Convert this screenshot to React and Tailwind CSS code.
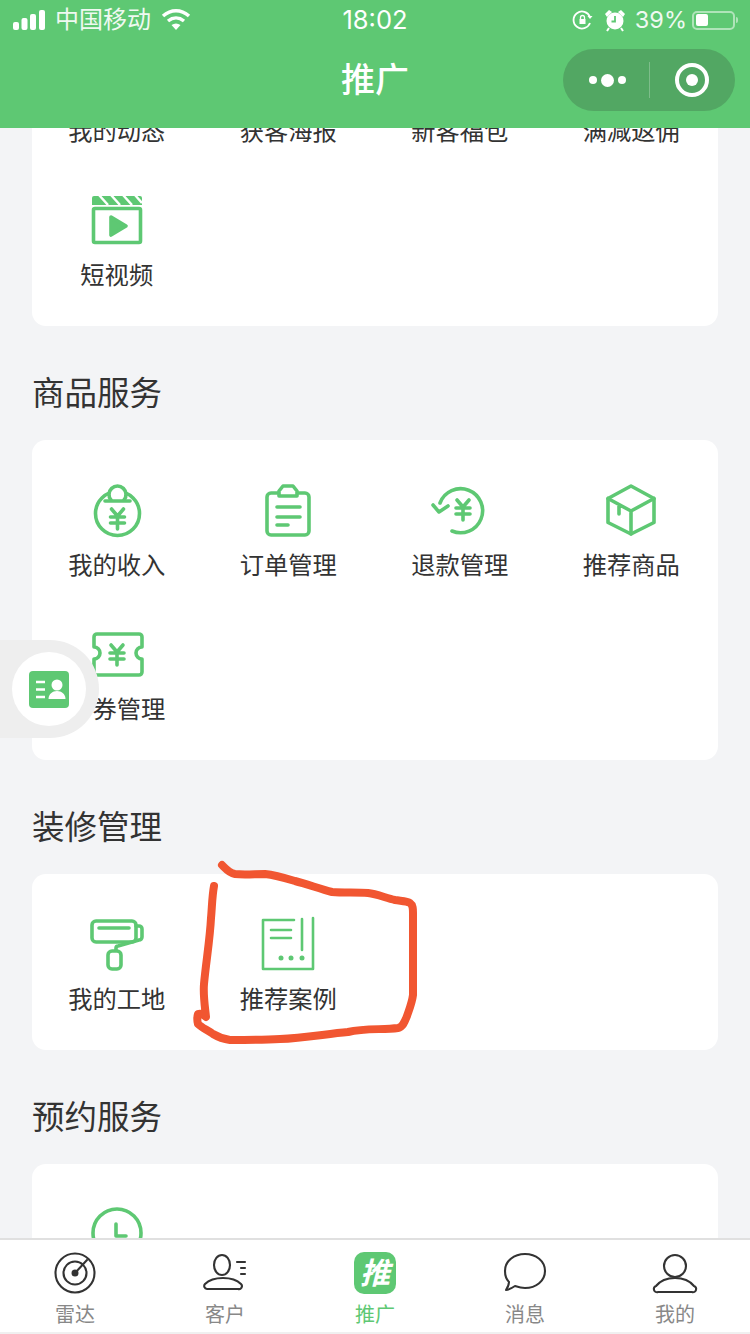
import React from 'react';

const GREEN = '#5ec873';

const Svg = ({ children, size = 64 }) => (
  <svg width={size} height={size} viewBox={`0 0 ${size} ${size}`} fill="none" stroke={GREEN} strokeWidth="3.6" strokeLinecap="round" strokeLinejoin="round">
    {children}
  </svg>
);

const Yen = ({ x, y }) => (
  <path d={`M${x - 6} ${y}l6 7l6 -7M${x - 7} ${y + 8}h14M${x - 7} ${y + 14}h14M${x} ${y + 7}v13`} />
);

const VideoIcon = () => (
  <Svg>
    <path d="M9 7h46a2 2 0 0 1 2 2v7H7V9a2 2 0 0 1 2-2z" fill={GREEN} stroke="none" />
    <path d="M14 6l9 10M26 6l9 10M38 6l9 10M50 6l7 8" stroke="#fff" strokeWidth="2.500" strokeLinecap="butt" />
    <rect x="8.500" y="19.500" width="47" height="34" rx="1.500" />
    <path d="M26 28l15 9l-15 9z" fill={GREEN} />
  </Svg>
);

const IncomeIcon = () => (
  <Svg>
    <circle cx="32.500" cy="34.500" r="22" />
    <path d="M26 21a8.500 8.500 0 1 1 13 0" fill="#fff" />
    <path d="M20 22h25" />
    <Yen x={32.5} y={30} />
  </Svg>
);

const OrderIcon = () => (
  <Svg>
    <rect x="11" y="14" width="42" height="42" rx="4" />
    <path d="M27 7h10l4 5v5H23v-5z" fill="#fff" />
    <path d="M21 28h23M21 38h23M21 46h11" />
  </Svg>
);

const RefundIcon = () => (
  <Svg>
    <path d="M12 24A22 22 0 1 1 24 52" />
    <path d="M5 26l6 7l9-6" />
    <Yen x={35} y={21} />
  </Svg>
);

const BoxIcon = () => (
  <Svg>
    <path d="M32 7l23 12.500v24L32 55L9 43.500v-24z" />
    <path d="M9 19.500L32 32l23-12.500M32 32v23M20 26v9" />
  </Svg>
);

const CouponIcon = () => (
  <Svg>
    <path d="M12 11h42a3 3 0 0 1 3 3v10a6 6 0 0 0 0 12v13a3 3 0 0 1-3 3H12a3 3 0 0 1-3-3V36a6 6 0 0 0 0-12V14a3 3 0 0 1 3-3z" />
    <Yen x={32} y={22} />
  </Svg>
);

const RollerIcon = () => (
  <Svg>
    <rect x="7" y="8" width="44" height="21" rx="4" />
    <path d="M14 15h30M51 13h3a3 3 0 0 1 3 3v8a3 3 0 0 1-3 3l-21 6a2 2 0 0 0-2 2v2" />
    <rect x="23" y="38" width="13" height="18" rx="4" />
  </Svg>
);

const CaseIcon = () => (
  <Svg>
    <g strokeWidth="2.600">
      <path d="M38 7H7v49h50V5" />
      <path d="M15 17h20M15 25h20M46 6v31" />
    </g>
    <g fill={GREEN} stroke="none">
      <circle cx="25" cy="45" r="2.500" />
      <circle cx="35" cy="45" r="2.500" />
      <circle cx="46" cy="45" r="2.500" />
    </g>
  </Svg>
);

const ClockIcon = () => (
  <Svg>
    <circle cx="32" cy="30" r="24" />
    <path d="M31 21v12h10" />
  </Svg>
);

const sections = [
  {
    title: null,
    items: [
      { label: '我的动态' },
      { label: '获客海报' },
      { label: '新客福包' },
      { label: '满减返佣' },
      { label: '短视频', icon: <VideoIcon /> },
    ],
  },
  {
    title: '商品服务',
    items: [
      { label: '我的收入', icon: <IncomeIcon /> },
      { label: '订单管理', icon: <OrderIcon /> },
      { label: '退款管理', icon: <RefundIcon /> },
      { label: '推荐商品', icon: <BoxIcon /> },
      { label: '卡券管理', icon: <CouponIcon /> },
    ],
  },
  {
    title: '装修管理',
    items: [
      { label: '我的工地', icon: <RollerIcon /> },
      { label: '推荐案例', icon: <CaseIcon /> },
    ],
  },
  {
    title: '预约服务',
    items: [{ label: '预约管理', icon: <ClockIcon /> }],
  },
];

const tabs = [
  {
    label: '雷达',
    icon: (
      <>
        <circle cx="24" cy="24" r="19.500" />
        <circle cx="24" cy="24" r="11.500" />
        <circle cx="24" cy="24" r="3.500" fill="#333" stroke="none" />
        <path d="M24 24L36 11" />
      </>
    ),
  },
  {
    label: '客户',
    icon: (
      <>
        <ellipse cx="21" cy="16" rx="8" ry="10" />
        <path d="M6 40h31a3 3 0 0 0 3-5c-4-4-11-6-18-6s-14 2-18 6a3 3 0 0 0 2 5zM36 13h8M40 19h4M40 25h4" />
      </>
    ),
  },
  { label: '推广', active: true },
  {
    label: '消息',
    icon: <path d="M5 41c2-3 3-6 3-8c-3-3-4-7-4-11C4 12 13 5 24 5s20 7 20 17s-9 17-20 17c-4 0-7-1-10-2c-3 2-6 4-9 4z" />,
  },
  {
    label: '我的',
    icon: (
      <>
        <circle cx="24" cy="17" r="11" />
        <path d="M7 43h34a3 3 0 0 0 2-6c-4-5-11-8-19-8s-15 3-19 8a3 3 0 0 0 2 6z" />
      </>
    ),
  },
];

const StatusBar = () => (
  <div className="grid h-[40px] grid-cols-3 items-center text-white">
    <div className="flex items-center">
      <svg width="34" height="20" viewBox="0 0 34 20" fill="#fff" className="ml-[12px]">
        <rect x="1" y="12" width="6" height="8" rx="2" />
        <rect x="9.500" y="8" width="6" height="12" rx="2" />
        <rect x="18" y="4" width="6" height="16" rx="2" />
        <rect x="27" y="0" width="6" height="20" rx="2" />
      </svg>
      <span className="ml-[9px] text-[24px] leading-none opacity-90">中国移动</span>
      <svg width="30" height="24" viewBox="0 0 30 24" fill="none" stroke="#fff" strokeWidth="3.500" className="ml-[10px]">
        <path d="M2 8c8-7 18-7 26 0M7 13c5-4 11-4 16 0" />
        <path d="M10.500 17c3-2 6-2 9 0l-4.500 5z" fill="#fff" stroke="none" />
      </svg>
    </div>
    <div className="text-center text-[25.500px] leading-none">18:02</div>
    <div className="flex items-center justify-end pr-[12px]">
      <svg width="22" height="22" viewBox="0 0 22 22" fill="none" stroke="#fff" strokeWidth="1.800">
        <path d="M18 14a8.500 8.500 0 1 1 0-6" />
        <path d="M20.500 7l-2.500 3l-2.500-3z" fill="#fff" stroke="none" />
        <rect x="7.500" y="10" width="6" height="5" fill="#fff" stroke="none" />
        <path d="M8.500 10V8.500a2 2 0 0 1 4 0V10" strokeWidth="1.300" />
      </svg>
      <svg width="22" height="24" viewBox="0 0 22 24" fill="#fff" className="ml-[10px]">
        <circle cx="11" cy="13" r="8.500" />
        <path d="M1 6l4-4l3 2l-5 5zM21 6l-4-4l-3 2l5 5z" />
        <path d="M11 8v5.500h-3.500" fill="none" stroke={GREEN} strokeWidth="1.800" />
        <path d="M5 20l-2 3M17 20l2 3" stroke="#fff" strokeWidth="2" />
      </svg>
      <span className="ml-[9px] text-[23.500px] leading-none opacity-90">39%</span>
      <div className="ml-[5px] flex items-center">
        <div className="flex h-[19px] w-[43px] items-center rounded-[5px] border-2 border-white/50 pl-[2px]">
          <div className="h-[12px] w-[12px] rounded-[2px] bg-white" />
        </div>
        <div className="ml-px h-[6px] w-[2px] rounded-r-sm bg-white/50" />
      </div>
    </div>
  </div>
);

const NavBar = () => (
  <div className="grid h-[80px] grid-cols-3 items-center text-white">
    <div />
    <div className="text-center text-[34px] leading-none font-medium">推广</div>
    <div className="flex justify-end pr-[15px]">
      <div className="flex h-[62px] w-[172px] items-center rounded-full bg-[#52a763]">
        <div className="flex w-[86px] items-center justify-center gap-[4px] pl-[2px]">
          <span className="h-[8px] w-[8px] rounded-full bg-white" />
          <span className="h-[13px] w-[13px] rounded-full bg-white" />
          <span className="h-[8px] w-[8px] rounded-full bg-white" />
        </div>
        <div className="h-[36px] w-px bg-white/25" />
        <div className="flex flex-1 items-center justify-center pr-[1px]">
          <div className="flex h-[34px] w-[34px] items-center justify-center rounded-full border-[4px] border-white">
            <span className="h-[12px] w-[12px] rounded-full bg-white" />
          </div>
        </div>
      </div>
    </div>
  </div>
);

const Section = ({ title, items }) => (
  <section>
    {title && (
      <h2 className="flex h-[114px] items-center pt-[22px] text-[32.500px] leading-none font-normal text-[#333]">{title}</h2>
    )}
    <div className="grid grid-cols-4 rounded-[14px] bg-white py-4">
      {items.map((item) => (
        <div key={item.label} className="flex h-[144px] flex-col items-center pt-[23px] pr-[2px]">
          <div className="h-[64px] w-[64px]">{item.icon}</div>
          <div className="mt-[5px] text-[24.300px] leading-[34px] whitespace-nowrap text-[#333]">{item.label}</div>
        </div>
      ))}
    </div>
  </section>
);

const ContactButton = () => (
  <div className="absolute top-[640px] left-0 flex h-[98px] w-[99px] items-center justify-end rounded-r-full bg-[#eeeeee] pr-[13px]">
    <div className="flex h-[74px] w-[74px] items-center justify-center rounded-full bg-white">
      <svg width="40" height="37" viewBox="0 0 40 37">
        <rect width="40" height="37" rx="4" fill={GREEN} />
        <path d="M7 11h9M7 18.500h9M7 26h9" stroke="#fff" strokeWidth="2.500" />
        <circle cx="28" cy="14" r="5.500" fill="#fff" />
        <path d="M19.500 28c0-5 4-8 8.500-8s8.500 3 8.500 8z" fill="#fff" />
      </svg>
    </div>
  </div>
);

const RedMark = () => (
  <svg className="absolute top-0 left-0" width="750" height="1334" fill="none" stroke="#f15631" strokeWidth="8" strokeLinecap="round" strokeLinejoin="round">
    <path d="M222 865c4 4 7 8 13 9c9 1 20 0 30 0c10 1 20 4 30 7c12 3 25 8 37 11c12 1 25 0 36 1c9 1 18 5 27 7c6 1 12 1 15 3c3 2 3 6 3 10v82c-1 8-4 15-6 21c-2 5-4 11-9 12c-15 2-33 0-50 4c-22 2-45 6-68 7c-16 1-35 1-50 1c-7-1-12-3-17-6c-5-4-11-6-15-10c-1-4-1-7 0-10c3-1 5 0 8 3c-1-10-3-22-2-33c2-22 6-45 7-66c1-10 1-21 3-32" />
  </svg>
);

const TabBar = () => (
  <nav className="relative z-10 grid h-[96px] shrink-0 grid-cols-5 border-t-2 border-b-2 border-t-[#e0e0e0] border-b-[#f0f0f0] bg-white">
    {tabs.map((tab) => (
      <div key={tab.label} className="flex flex-col items-center pt-[9px]">
        <div className="flex h-[48px] w-[48px] items-center justify-center">
          {tab.active ? (
            <div className="flex h-[42px] w-[42px] items-center justify-center rounded-[10px] bg-[#5ec873] text-[30px] leading-none font-bold text-white italic">
              推
            </div>
          ) : (
            <svg width="48" height="48" viewBox="0 0 48 48" fill="none" stroke="#333" strokeWidth="2.100" strokeLinecap="round" strokeLinejoin="round">
              {tab.icon}
            </svg>
          )}
        </div>
        <div className={`mt-[6px] text-[20px] leading-[24px] ${tab.active ? 'text-[#5ec873]' : 'text-[#888888]'}`}>{tab.label}</div>
      </div>
    ))}
  </nav>
);

export default function App() {
  return (
    <div className="relative flex h-[1334px] w-[750px] flex-col overflow-hidden bg-[#f3f4f6] font-['Inter','Noto_Sans_CJK_SC',sans-serif]">
      <header className="relative z-10 h-[128px] shrink-0 bg-[#5ec873]">
        <StatusBar />
        <NavBar />
      </header>
      <main className="min-h-0 flex-1 overflow-hidden px-[32px]">
        <div className="-mt-[122px]">
          {sections.map((s) => (
            <Section key={s.title || 'top'} title={s.title} items={s.items} />
          ))}
        </div>
      </main>
      <TabBar />
      <ContactButton />
      <RedMark />
    </div>
  );
}
